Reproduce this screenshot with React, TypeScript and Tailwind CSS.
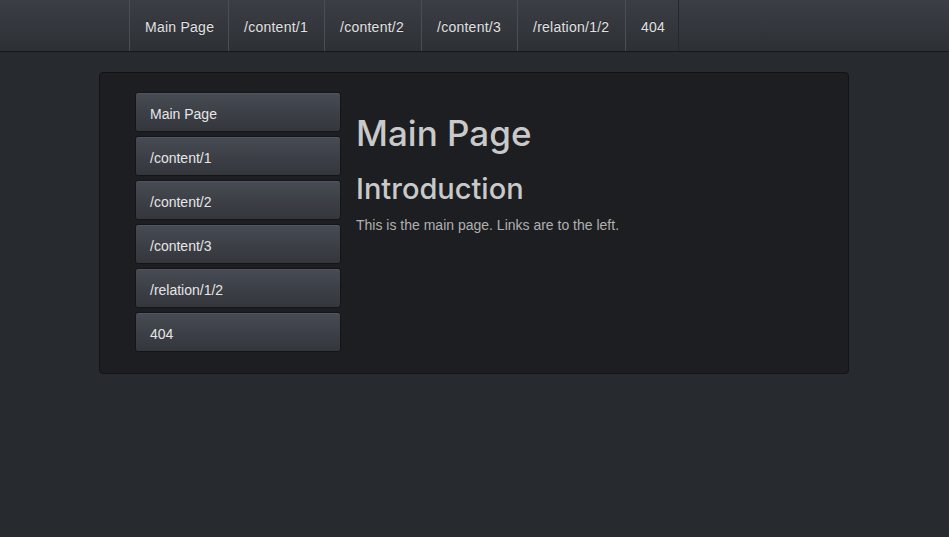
import React from "react";

const links = ["Main Page", "/content/1", "/content/2", "/content/3", "/relation/1/2", "404"];
const navWidths = ["w-[99px]", "w-[96px]", "w-[97px]", "w-[96px]", "w-[108px]", "w-[54px]"];

export default function App() {
  return (
    <div
      className="min-h-[537px] w-full bg-[#272a2f]"
      style={{ fontFamily: '"Liberation Sans", Arial, sans-serif' }}
    >
      <nav className="h-[52px] border-b border-[#15171a] bg-gradient-to-b from-[#3b3f45] to-[#2d3035]">
        <ul className="flex h-[51px] pl-[129px]">
          {links.map((l, i) => (
            <li
              key={l}
              className={`flex h-full shrink-0 items-center border-l border-[#4a4e55] pl-[15px] pt-[3px] text-[14px] tracking-[0.25px] text-[#e2e2e2] ${navWidths[i]} ${
                i === links.length - 1 ? "border-r border-r-[#24272b]" : ""
              }`}
              style={{ textShadow: "0 -1px 0 rgba(0,0,0,0.4)" }}
            >
              {l}
            </li>
          ))}
        </ul>
      </nav>
      <div className="ml-[99px] mt-[20px] flex w-[750px] gap-[15px] rounded-[4px] border border-[#121316] bg-[#1d1e22] pb-[21px] pl-[35px] pt-[19px]">
        <div className="flex w-[206px] flex-col gap-[4px]">
          {links.map((l) => (
            <div
              key={l}
              className="h-[40px] rounded-[3px] border border-[#141518] bg-gradient-to-b from-[#474b53] to-[#33363b] px-[14px] pt-[13px] text-[14px] leading-[16px] text-[#e6e6e6]"
              style={{ boxShadow: "inset 0 1px 0 rgba(255,255,255,0.06)" }}
            >
              {l}
            </div>
          ))}
        </div>
        <div className="flex-1" style={{ fontFamily: "Inter, 'Liberation Sans', sans-serif" }}>
          <h1 className="mt-[21px] text-[35px] leading-[40px] font-medium text-[#c9c9c9]">Main Page</h1>
          <h2 className="mt-[19px] text-[29px] leading-[34px] font-medium text-[#c9c9c9]">Introduction</h2>
          <p
            className="mt-[9px] text-[14px] leading-[20px] text-[#b0b0b0]"
            style={{ fontFamily: '"Liberation Sans", Arial, sans-serif' }}
          >
            This is the main page. Links are to the left.
          </p>
        </div>
      </div>
    </div>
  );
}
